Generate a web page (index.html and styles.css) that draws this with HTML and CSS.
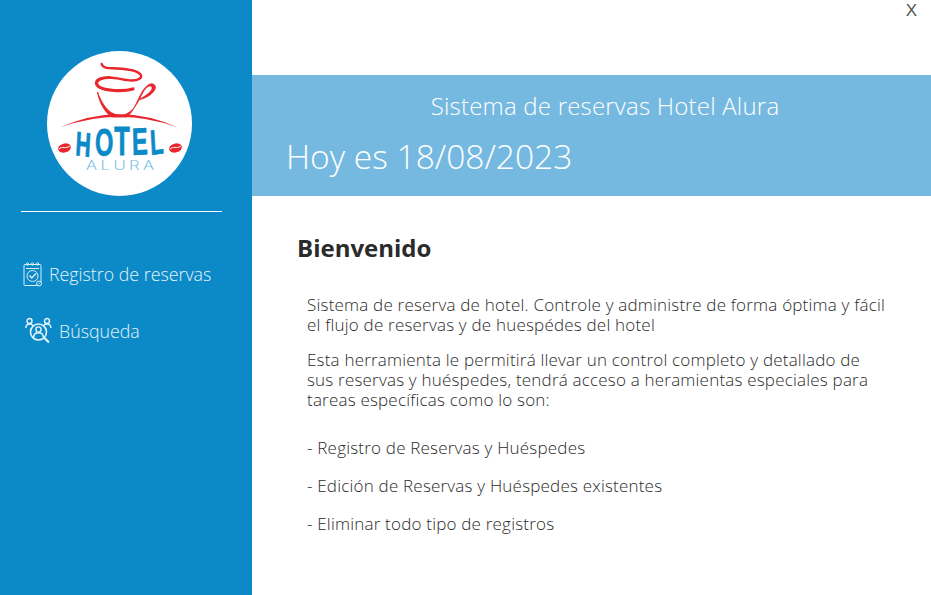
FILE: index.html
```html
<!DOCTYPE html>
<html lang="es">
<head>
<meta charset="utf-8">
<title>Hotel Alura</title>
<link rel="stylesheet" href="styles.css">
</head>
<body>
<div class="app">
  <aside class="sidebar">
    <div class="logo">
      <svg viewBox="0 0 145 145" width="145" height="145">
        <circle cx="72.5" cy="72.5" r="72.5" fill="#fff"/>
        <g fill="none" stroke="#e8262c" stroke-linecap="round">
          <path d="M54.700 13C56 18 63 17 70 17.500C80 18 90 19 93.500 23.500C96 27 91 29.500 85 29.500C78 29.500 70 26.500 62 26.500" stroke-width="2.400"/>
          <path d="M62 26.500C55 26.500 49.500 28.500 49.500 32C49.500 36 56 38.500 67 39.500C74 40 81 39.500 86 38" stroke-width="3.200"/>
        </g>
        <path fill="#e8262c" stroke="#e8262c" stroke-width=".9" d="M50.500 41C52 51 58 62 65 66L80 66C87 60 90 50 95 41C98 36 103 31 107 33.500C110 36 108 40 103 44C100 46 96 48 92 48.500C97 46 101 43 104 40C106 37 105 35 103 35C99 35 96 41 93 47C89 55 85 61 77 64C71 65 65 63 61 59C56 54 53 48 50.500 41Z"/>
        <path fill="#e8262c" d="M13 76.500Q72 50 131 76.500Q72 55 13 76.500Z"/>
        <g fill="#e8262c">
          <ellipse cx="17.500" cy="97" rx="6.500" ry="4.500" transform="rotate(-15 17.500 97)"/>
          <ellipse cx="128.500" cy="97" rx="6.500" ry="4.500" transform="rotate(-15 128.500 97)"/>
        </g>
        <path d="M12 98c3-3 7 0 11-3M123 98c3-3 7 0 11-3" stroke="#fff" stroke-width="1" fill="none"/>
        <text class="logo-hotel" transform="scale(.62 1)" text-anchor="middle" y="104"><tspan x="57.500" font-size="34" rotate="5">H</tspan><tspan x="92" font-size="38" rotate="2">O</tspan><tspan x="121" font-size="41">T</tspan><tspan x="150" font-size="38" rotate="-2">E</tspan><tspan x="178" font-size="35" rotate="-5">L</tspan></text>
        <text class="logo-alura" transform="scale(1.34 1)" x="55.800" y="119" text-anchor="middle">ALURA</text>
      </svg>
    </div>
    <hr class="divider">
    <nav class="menu">
      <a class="menu-item item-registro">
        <svg class="icon" viewBox="0 0 20 26" width="20" height="26" fill="none" stroke="#d9eef9" stroke-width="1">
          <rect x="1" y="3.500" width="17" height="21" rx="1"/>
          <circle cx="4.500" cy="3" r="1.200"/>
          <circle cx="9.500" cy="3" r="1.200"/>
          <circle cx="14.500" cy="3" r="1.200"/>
          <path d="M3 7.500h13"/>
          <circle cx="9.500" cy="15" r="5.500"/>
          <path d="M6.500 14.500l2.300 2.500 4.200-4.500" stroke-width="1.500"/>
          <circle cx="16" cy="22.500" r="2.500" fill="#0c8ac7"/>
          <path d="M15 23.500l2-2"/>
        </svg>
        <span>Registro de reservas</span>
      </a>
      <a class="menu-item item-busqueda">
        <svg class="icon" viewBox="0 0 28 28" width="28" height="28" fill="none" stroke="#e4f3fb" stroke-width="1.400">
          <circle cx="4.500" cy="4" r="2.500"/>
          <path d="M.700 11c.300-2.800 1.800-4 3.800-4 1.500 0 2.800.500 3.500 1.500"/>
          <circle cx="22" cy="4" r="2.500"/>
          <path d="M26 11c-.300-2.800-1.800-4-3.800-4-1.500 0-2.800.500-3.500 1.500"/>
          <circle cx="13.500" cy="15" r="8" stroke-width="1.600"/>
          <circle cx="13.500" cy="12.500" r="2.600"/>
          <path d="M8.500 20.500c.300-3 2.300-4.800 5-4.800s4.700 1.800 5 4.800"/>
          <path d="M19.500 21l4.500 4.500" stroke-width="2.200"/>
        </svg>
        <span>Búsqueda</span>
      </a>
    </nav>
  </aside>
  <main class="main">
    <div class="topbar"><button class="close">X</button></div>
    <header class="banner">
      <h2 class="banner-title">Sistema de reservas Hotel Alura</h2>
      <p class="banner-date">Hoy es 18/08/2023</p>
    </header>
    <section class="content">
      <h1 class="welcome">Bienvenido</h1>
      <div class="copy">
        <p class="para">Sistema de reserva de hotel. Controle y administre de forma óptima y fácil<br>el flujo de reservas y de huespédes del hotel</p>
        <p class="para para-second">Esta herramienta le permitirá llevar un control completo y detallado de<br>sus reservas y huéspedes, tendrá acceso a heramientas especiales para<br>tareas específicas como lo son:</p>
        <ul class="features">
          <li>- Registro de Reservas y Huéspedes</li>
          <li>- Edición de Reservas y Huéspedes existentes</li>
          <li>- Eliminar todo tipo de registros</li>
        </ul>
      </div>
    </section>
  </main>
</div>
</body>
</html>
```
FILE: styles.css
```css
* { box-sizing: border-box; }
html, body { margin: 0; height: 100%; background: #fff; }
body { font-family: "Open Sans", "Noto Sans", sans-serif; overflow: hidden; }
.app { display: flex; width: 931px; height: 595px; }

.sidebar { width: 252px; flex: none; background: #0c8ac7; padding: 51px 30px 0 21px; }
.logo { width: 145px; height: 145px; margin-left: 26px; }
.logo svg { display: block; }
.logo-hotel { font-family: "Liberation Sans", sans-serif; font-weight: 700; fill: #0c8ac7; stroke: #0c8ac7; stroke-width: .8px; }
.logo-alura { font-family: "Inter", sans-serif; font-weight: 200; font-size: 12.5px; fill: #6fbbe6; stroke: #6fbbe6; stroke-width: .15px; letter-spacing: 2.6px; }
.divider { width: 201px; height: 1px; margin: 15px 0 0; border: 0; background: #fff; }
.menu { display: flex; flex-direction: column; margin-top: 48px; }
.menu-item { display: flex; align-items: center; color: #e4f3fb; font-size: 17.800px; font-weight: 300; line-height: 28px; }
.item-registro { gap: 6px; margin-left: 2px; }
.item-busqueda { gap: 6px; margin-left: 4px; margin-top: 29px; }
.icon { flex: none; }

.main { flex: 1; display: flex; flex-direction: column; }
.topbar { height: 75px; display: flex; justify-content: flex-end; align-items: flex-start; }
.close { border: 0; background: none; padding: 0; margin: 2px 14px 0 0; font: 400 17px/18px "Liberation Sans", sans-serif; color: #555; }
.banner { height: 121px; background: #76b9e0; color: #fff; padding: 17px 0 0 35px; }
.banner-title { margin: 0 8px 0 0; text-align: center; font-size: 24px; font-weight: 300; letter-spacing: .2px; line-height: 28px; }
.banner-date { margin: 16px 0 0 -1px; font-size: 33.500px; font-weight: 300; line-height: 40px; }
.content { padding: 37px 0 0 45px; color: #2b2b2b; }
.welcome { margin: 0; font-size: 24px; font-weight: 700; line-height: 30px; }
.copy { margin: 32px 0 0 10px; font-size: 17px; letter-spacing: .2px; font-weight: 300; line-height: 20px; }
.para { margin: 0; }
.para-second { margin-top: 15px; }
.features { list-style: none; margin: 28px 0 0; padding: 0; display: flex; flex-direction: column; gap: 18px; }
```
